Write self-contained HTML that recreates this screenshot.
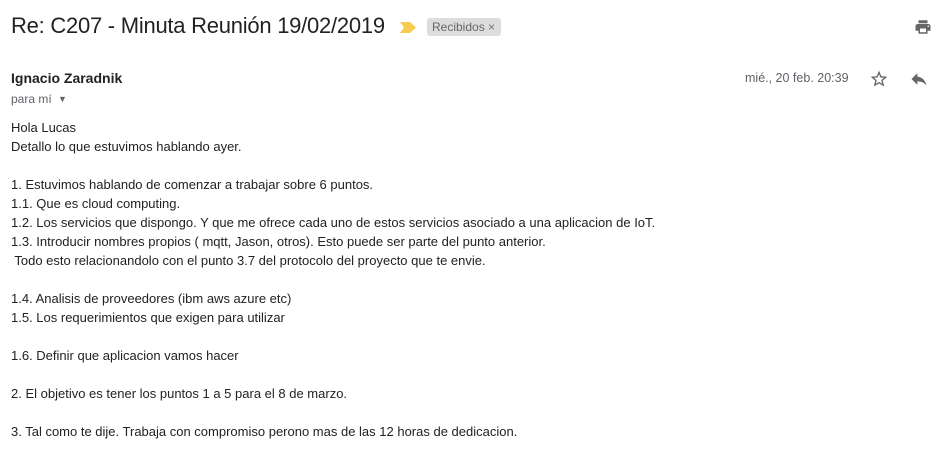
<!DOCTYPE html>
<html><head><meta charset="utf-8"><style>
body{margin:0;width:951px;height:451px;background:#fff;font-family:"Liberation Sans",Arial,sans-serif;position:relative;overflow:hidden;color:#222}
.t{position:absolute;left:11px;top:13px;font-size:22px;color:#222;white-space:nowrap;letter-spacing:-0.25px}
.lbl{position:absolute;left:427px;top:18px;height:18px;background:#ddd;border-radius:3px;font-size:12px;color:#666;line-height:18px;padding:0 6px 0 5px}
.from{position:absolute;left:11px;top:70px;font-size:14px;font-weight:bold;color:#222}
.to{position:absolute;left:11px;top:92px;font-size:12px;color:#5f6368}
.date{position:absolute;left:745px;top:71px;font-size:12.5px;color:#5f6368}
.body{position:absolute;left:11px;top:118px;font-size:13px;line-height:19px;color:#222;white-space:pre}
</style></head><body>
<div class="t">Re: C207 - Minuta Reunión 19/02/2019</div>
<svg style="position:absolute;left:400px;top:22px" width="17" height="11"><path d="M0 0H10L16 5.5 10 11H0L4 5.5Z" fill="#f7cb4d"/></svg>
<div class="lbl">Recibidos <span style="color:#777">×</span></div>
<svg style="position:absolute;left:914px;top:18px" width="18" height="18" viewBox="0 0 24 24"><path fill="#666" d="M19 8H5c-1.66 0-3 1.34-3 3v6h4v4h12v-4h4v-6c0-1.66-1.34-3-3-3zm-3 11H8v-5h8v5zm3-7c-.55 0-1-.45-1-1s.45-1 1-1 1 .45 1 1-.45 1-1 1zm-1-9H6v4h12V3z"/></svg>
<div class="from">Ignacio Zaradnik</div>
<div class="to">para mí <span style="font-size:9px;position:relative;top:-1px;margin-left:3px">▼</span></div>
<div class="date">mié., 20 feb. 20:39</div>
<svg style="position:absolute;left:869px;top:69px" width="20" height="20" viewBox="0 0 24 24"><path fill="#666" d="M22 9.24l-7.19-.62L12 2 9.190 8.63 2 9.24l5.46 4.730L5.82 21 12 17.27 18.18 21l-1.63-7.03L22 9.24zM12 15.4l-3.76 2.27 1-4.28-3.32-2.88 4.38-.38L12 6.1l1.71 4.04 4.38.38-3.32 2.88 1 4.28L12 15.4z"/></svg>
<svg style="position:absolute;left:909px;top:69px" width="20" height="20" viewBox="0 0 24 24"><path fill="#666" d="M10 9V5l-7 7 7 7v-4.1c5 0 8.5 1.6 11 5.1-1-5-4-10-11-11z"/></svg>
<div class="body">Hola Lucas
Detallo lo que estuvimos hablando ayer.

1. Estuvimos hablando de comenzar a trabajar sobre 6 puntos.
1.1. Que es cloud computing.
1.2. Los servicios que dispongo. Y que me ofrece cada uno de estos servicios asociado a una aplicacion de IoT.
1.3. Introducir nombres propios ( mqtt, Jason, otros). Esto puede ser parte del punto anterior.
 Todo esto relacionandolo con el punto 3.7 del protocolo del proyecto que te envie.

1.4. Analisis de proveedores (ibm aws azure etc)
1.5. Los requerimientos que exigen para utilizar

1.6. Definir que aplicacion vamos hacer

2. El objetivo es tener los puntos 1 a 5 para el 8 de marzo.

3. Tal como te dije. Trabaja con compromiso perono mas de las 12 horas de dedicacion.</div>
</body></html>
